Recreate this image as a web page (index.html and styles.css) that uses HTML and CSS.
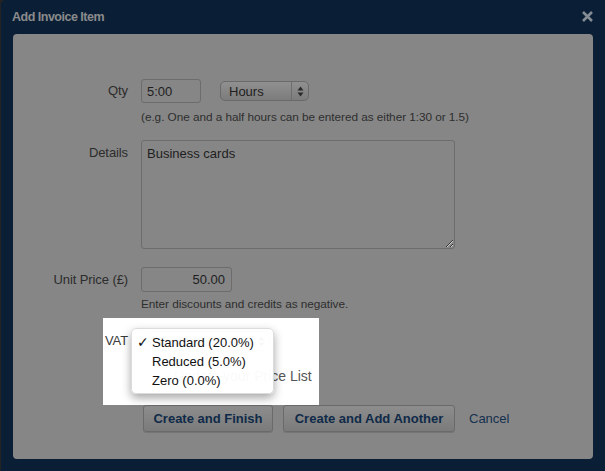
FILE: index.html
```html
<!DOCTYPE html>
<html>
<head>
<meta charset="utf-8">
<title>Add Invoice Item</title>
<link rel="stylesheet" href="styles.css">
</head>
<body>
<div class="dialog">
  <div class="header">
    <span class="title">Add Invoice Item</span>
    <svg class="close" width="11" height="11" viewBox="0 0 11 11"><path d="M1 1L10 10M10 1L1 10" stroke="#858c94" stroke-width="2.6"/></svg>
  </div>
  <div class="panel">
    <div class="spotlight"></div>

    <div class="row row-qty">
      <div class="label">Qty</div>
      <div class="field">
        <div class="inline">
          <input class="input qty" value="5:00">
          <div class="select hours">
            <span class="sel-text">Hours</span>
            <span class="sel-arrow"><svg width="7" height="11" viewBox="0 0 7 11"><path d="M3.5 0.5L6.5 4.5H0.5Z M3.5 10.5L6.5 6.5H0.5Z" fill="#2a2a2a"/></svg></span>
          </div>
        </div>
        <p class="hint">(e.g. One and a half hours can be entered as either 1:30 or 1.5)</p>
      </div>
    </div>

    <div class="row row-details">
      <div class="label">Details</div>
      <div class="field">
        <textarea class="textarea">Business cards</textarea>
      </div>
    </div>

    <div class="row row-price">
      <div class="label">Unit Price (£)</div>
      <div class="field">
        <input class="input price" value="50.00">
        <p class="hint hint-price">Enter discounts and credits as negative.</p>
      </div>
    </div>

    <div class="row row-vat">
      <div class="label">VAT</div>
      <div class="field">
        <div class="select vat-select">
          <span class="sel-text">Standard (20.0%)</span>
          <span class="sel-arrow light"><svg width="7" height="11" viewBox="0 0 7 11"><path d="M3.5 0.5L6.5 4.5H0.5Z M3.5 10.5L6.5 6.5H0.5Z" fill="#333"/></svg></span>
        </div>
        <div class="menu">
          <div class="menu-item"><span class="check">✓</span>Standard (20.0%)</div>
          <div class="menu-item"><span class="check"></span>Reduced (5.0%)</div>
          <div class="menu-item"><span class="check"></span>Zero (0.0%)</div>
        </div>
      </div>
    </div>

    <div class="row row-check">
      <div class="label"></div>
      <div class="field check-field">
        <span class="checkbox"></span>
        <span class="check-text">Update your Price List</span>
      </div>
    </div>

    <div class="actions">
      <button class="btn btn-finish">Create and Finish</button>
      <button class="btn btn-another">Create and Add Another</button>
      <span class="cancel">Cancel</span>
    </div>
  </div>
</div>
</body>
</html>
```
FILE: styles.css
```css
* { box-sizing: border-box; }
html, body { margin: 0; padding: 0; }
body {
  background: #232323;
  width: 605px;
  height: 471px;
  overflow: hidden;
  font-family: "Liberation Sans", Arial, sans-serif;
}
.dialog {
  margin-left: 1px;
  height: 471px;
  background: #0a1f36;
  border-radius: 5px 0 0 0;
  display: flex;
  flex-direction: column;
}
.header {
  height: 34px;
  flex: none;
  display: flex;
  align-items: center;
  justify-content: space-between;
  padding: 0 12px 0 11px;
}
.title {
  font-size: 12.5px;
  letter-spacing: -0.5px;
  font-weight: bold;
  color: #8b8b8b;
  margin-top: -1px;
}
.close { display: block; margin-top: -1px; }
.panel {
  position: relative;
  margin: 0 12px 0 12px;
  height: 425px;
  background: #868686;
  border-radius: 4px;
  padding-top: 45px;
}
.spotlight {
  position: absolute;
  left: 90px;
  top: 284px;
  width: 216px;
  height: 87px;
  background: #fff;
}
.row {
  display: flex;
  position: relative;
  z-index: 1;
}
.label {
  flex: none;
  width: 115px;
  margin-right: 13px;
  text-align: right;
  font-size: 13px;
  letter-spacing: -0.1px;
  color: #2c2c2c;
}
.field { flex: 1; }
.inline { display: flex; align-items: flex-start; }
.input {
  display: block;
  height: 24px;
  border: 1px solid #6c6c6c;
  border-radius: 3px;
  background: #868686;
  font-family: "Liberation Sans", Arial, sans-serif;
  font-size: 13px;
  color: #1e1e1e;
  padding: 0 5px;
  outline: none;
  margin: 0;
}
.qty { width: 60px; }
.row-qty .label { line-height: 24px; }
.select {
  display: flex;
  align-items: center;
  height: 20px;
  border: 1px solid #6a6a6a;
  border-radius: 5px;
  background: linear-gradient(#909090, #7c7c7c);
  font-size: 13px;
  color: #1e1e1e;
}
.hours {
  width: 89px;
  margin-left: 19px;
  margin-top: 2px;
}
.sel-text { flex: 1; padding-left: 8px; }
.sel-arrow {
  width: 17px;
  height: 100%;
  border-left: 1px solid #6e6e6e;
  display: flex;
  align-items: center;
  justify-content: center;
}
.sel-arrow svg { display: block; }
.hint {
  margin: 6px 0 0 0;
  font-size: 11.8px;
  letter-spacing: -0.05px;
  line-height: 16px;
  color: #2e2e2e;
}
.row-details { margin-top: 15px; }
.row-details .label { line-height: 16px; padding-top: 5px; }
.textarea {
  display: block;
  width: 314px;
  height: 109px;
  border: 1px solid #6c6c6c;
  border-radius: 3px;
  background: #868686;
  font-family: "Liberation Sans", Arial, sans-serif;
  font-size: 13px;
  line-height: 16px;
  color: #1e1e1e;
  padding: 5px 5px;
  margin: 0;
  outline: none;
}
.row-price { margin-top: 18px; }
.row-price .label { line-height: 25px; }
.price {
  width: 91px;
  height: 25px;
  text-align: right;
  padding-right: 6px;
}
.hint-price { margin-top: 4px; }
.row-vat { margin-top: 19px; z-index: 3; }
.row-vat .label { line-height: 20px; color: #3a3a3a; }
.row-vat .field { position: relative; }
.vat-select {
  width: 129px;
  border-color: #c4c4c4;
  background: linear-gradient(#ffffff, #ececec);
  color: #333;
}
.sel-arrow.light { border-left-color: #d0d0d0; }
.menu {
  position: absolute;
  left: -10px;
  top: -3px;
  width: 143px;
  height: 66px;
  background: rgba(255, 255, 255, 0.97);
  border: 1px solid #dcdcdc;
  border-radius: 5px;
  box-shadow: 0 4px 10px rgba(0, 0, 0, 0.35);
  padding-top: 4px;
  z-index: 2;
}
.menu-item {
  display: flex;
  font-size: 13px;
  line-height: 19px;
  color: #111;
  padding-left: 5px;
}
.check {
  width: 15px;
  flex: none;
  font-family: "DejaVu Sans", sans-serif;
  font-size: 14px;
}
.row-check { margin-top: 16px; }
.check-field {
  display: flex;
  align-items: center;
  height: 18px;
}
.checkbox {
  width: 13px;
  height: 13px;
  border: 1px solid #e2e2e2;
  border-radius: 3px;
  margin-right: 20px;
}
.check-text {
  font-size: 14px;
  color: #555;
}
.actions {
  display: flex;
  align-items: center;
  margin-top: 20px;
  padding-left: 130px;
}
.btn {
  height: 27px;
  border: 1px solid #6a6a6a;
  border-radius: 3px;
  background: linear-gradient(#8d8d8d, #7b7b7b);
  box-shadow: 0 1px 0 rgba(0, 0, 0, 0.12);
  font-family: "Liberation Sans", Arial, sans-serif;
  font-size: 13px;
  font-weight: bold;
  color: #0f2a48;
  padding: 0;
  margin: 0;
}
.btn-finish { width: 130px; }
.btn-another { width: 172px; margin-left: 10px; }
.cancel {
  margin-left: 14px;
  font-size: 13px;
  color: #14304f;
}
```
